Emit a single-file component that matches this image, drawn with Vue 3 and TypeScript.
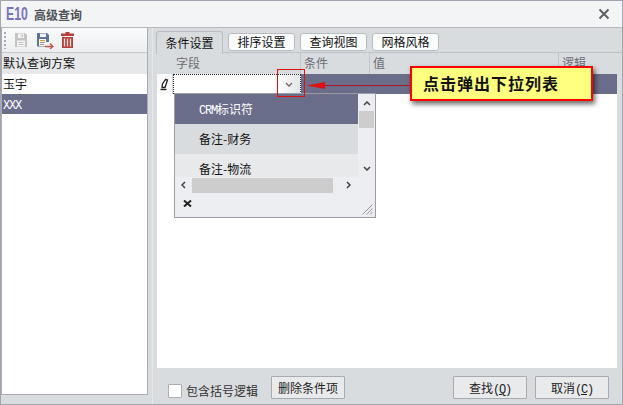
<script setup lang="ts">
const plans = [
  { name: '玉宇', latin: '', selected: false },
  { name: '', latin: 'XXX', selected: true },
]
const tabs = ['条件设置', '排序设置', '查询视图', '网格风格']
const options = [
  { latin: 'CRM', name: '标识符', cls: 'opt-sel' },
  { latin: '', name: '备注-财务', cls: 'opt-a' },
  { latin: '', name: '备注-物流', cls: 'opt-b' },
]
</script>

<template>
  <div class="win">
    <header class="title">
      <span class="logo">E10</span>
      <span class="title-text">高级查询</span>
      <svg class="close" width="12" height="12" viewBox="0 0 12 12"><path d="M1.500 1.500l9 9M10.500 1.500l-9 9" stroke="#5c6066" stroke-width="2" fill="none"/></svg>
    </header>
    <div class="body">
      <aside class="left">
        <div class="toolbar">
          <span class="grip"></span>
          <svg width="14" height="16" viewBox="0 0 14 16"><path d="M1 1h10l2 2v12H1z" fill="#c4c4c4"/><path d="M4 1.500h6v4.500H4z" fill="#f2f2f2"/><path d="M7.500 2.500h1.500v2.500H7.500z" fill="#c4c4c4"/><path d="M3 8.500h8v6H3z" fill="#f2f2f2"/><path d="M4.500 10.500h5M4.500 12.500h5" stroke="#c4c4c4"/></svg>
          <svg class="saveas" width="18" height="17" viewBox="0 0 18 17"><path d="M1 1h10l2 2v7H9.500v4.500H1z" fill="#5f7596"/><path d="M4 1.500h6v3.500H4z" fill="#f2f4f7"/><path d="M3 7h7v7H3z" fill="#fbf6e8"/><path d="M4 8.500h5" stroke="#d9992e"/><path d="M4 10.500h5M4 12.500h4" stroke="#8a9ab0"/><path d="M9 14.500h8M14 11.500l3 3-3 2.500" fill="none" stroke="#c8504c" stroke-width="1.300"/></svg>
          <svg class="trash" width="13" height="16" viewBox="0 0 13 16"><path d="M4.500 0h4v1.500H13v2.500H0V1.500h4.500z" fill="#b5403b"/><path d="M1 5h11v11H1z" fill="#b5403b"/><path d="M3.500 6.500v8M6.500 6.500v8M9.500 6.500v8" stroke="#f3dede" stroke-width="1.300"/></svg>
        </div>
        <div class="plan-head">默认查询方案</div>
        <div v-for="p in plans" :key="p.name + p.latin" class="plan" :class="{ sel: p.selected }"><span class="lat">{{ p.latin }}</span>{{ p.name }}</div>
      </aside>
      <span class="splitter"></span>
      <main class="right">
        <nav class="tabs">
          <span v-for="(t, i) in tabs" :key="t" class="tab" :class="{ active: i === 0 }">{{ t }}</span>
        </nav>
        <div class="grid">
          <div class="grid-head">
            <span class="h h1">字段</span>
            <span class="h h2">条件</span>
            <span class="h h3">值</span>
            <span class="h h4">逻辑</span>
          </div>
          <div class="grid-row">
            <span class="pen"><svg width="9" height="13" viewBox="0 0 9 13"><path d="M5.500 1.500L7.500 2 5 9.500 2 9.500 2.500 6z" fill="#fff" stroke="#222" stroke-width="1.300"/><path d="M.5 11.500h6" stroke="#222" stroke-width="1.300"/></svg></span>
            <span class="edit">
              <span class="drop-btn"><svg width="8" height="5" viewBox="0 0 8 5"><path d="M1 1l3 3 3-3" fill="none" stroke="#666a70" stroke-width="1.300"/></svg></span>
            </span>
            <span class="row-fill"></span>
          </div>
          <div class="grid-white"></div>
        </div>
        <footer class="foot">
          <span class="check"></span>
          <span class="check-label">包含括号逻辑</span>
          <button class="btn del">删除条件项</button>
          <span class="spacer"></span>
          <button class="btn act">查找<span class="lat">(<u>Q</u>)</span></button>
          <button class="btn act">取消<span class="lat">(<u>C</u>)</span></button>
        </footer>
      </main>
    </div>

    <div class="dropdown">
      <div class="dd-main">
        <div class="dd-list">
          <div v-for="o in options" :key="o.name" class="opt" :class="o.cls"><span class="lat">{{ o.latin }}</span>{{ o.name }}</div>
        </div>
        <div class="vbar">
          <svg width="8" height="5" viewBox="0 0 8 5"><path d="M1 4l3-3 3 3" fill="none" stroke="#444" stroke-width="1.500"/></svg>
          <span class="vthumb"></span>
          <span class="spacer"></span>
          <svg width="8" height="5" viewBox="0 0 8 5"><path d="M1 1l3 3 3-3" fill="none" stroke="#444" stroke-width="1.500"/></svg>
        </div>
      </div>
      <div class="hbar">
        <svg width="5" height="8" viewBox="0 0 5 8"><path d="M4 1L1 4l3 3" fill="none" stroke="#444" stroke-width="1.500"/></svg>
        <span class="hthumb"></span>
        <svg width="5" height="8" viewBox="0 0 5 8"><path d="M1 1l3 3-3 3" fill="none" stroke="#444" stroke-width="1.500"/></svg>
      </div>
      <div class="dd-foot">
        <svg class="dd-x" width="9" height="7" viewBox="0 0 9 7"><path d="M1 .5l7 6M8 .5l-7 6" stroke="#222" stroke-width="2" fill="none"/></svg>
        <svg class="dd-grip" width="11" height="11" viewBox="0 0 11 11"><path d="M10.500 .5L.5 10.500M10.500 4.500L4.500 10.500M10.500 8L8 10.500" stroke="#999" fill="none"/></svg>
      </div>
    </div>

    <div class="mark"></div>
    <svg class="arrow" width="104" height="12" viewBox="0 0 104 12">
      <path d="M14 6.500h90" stroke="#a81818" stroke-width="1"/>
      <path d="M0 6.500L18 3V10z" fill="#e01010"/>
    </svg>
    <div class="callout">点击弹出下拉列表</div>
  </div>
</template>

<style>
html, body { margin: 0; padding: 0; background: #fff; }
</style>

<style scoped>
.win {
  position: relative;
  width: 623px;
  height: 405px;
  box-sizing: border-box;
  border: 1px solid #a3a6b0;
  background: #d9dcdf;
  font-family: "Noto Sans CJK SC", "Liberation Sans", sans-serif;
  font-size: 12px;
  color: #111;
  display: flex;
  flex-direction: column;
  overflow: hidden;
}
.lat {
  font-family: "Liberation Mono", monospace;
  letter-spacing: -1.2px;
}
.title {
  height: 27px;
  flex: none;
  display: flex;
  align-items: center;
  box-sizing: border-box;
  background: #f3f4f6;
  border-bottom: 1px solid #b5b9be;
  padding-left: 5px;
  padding-right: 12px;
}
.logo {
  font-family: "Liberation Sans", sans-serif;
  font-size: 18px;
  font-weight: 700;
  color: #7a72c4;
  width: 28px;
  display: inline-block;
  transform: scaleX(.68);
  transform-origin: left center;
}
.title-text { font-weight: 700; color: #4e5259; flex: 1; }
.body { flex: 1; display: flex; min-height: 0; }
.left {
  width: 147px;
  margin-bottom: 9px;
  box-sizing: border-box;
  background: #fff;
  border-left: 1px solid #a9adb3;
  border-right: 1px solid #a9adb3;
  border-bottom: 1px solid #a9adb3;
  display: flex;
  flex-direction: column;
  flex: none;
}
.toolbar {
  height: 25px;
  flex: none;
  background: linear-gradient(#fbfbfc, #eceef0);
  border-bottom: 1px solid #c4c7cb;
  display: flex;
  align-items: center;
  gap: 8px;
  padding-left: 2px;
  box-sizing: border-box;
}
.grip {
  width: 2px;
  height: 17px;
  background: repeating-linear-gradient(#a8abb0 0 2px, transparent 2px 4px);
}
.trash { margin-left: -1px; }
.plan-head, .plan {
  height: 20px;
  line-height: 20px;
  padding-left: 1px;
  flex: none;
  white-space: nowrap;
}
.plan-head { background: #e7e8ea; height: 21px; }
.plan.sel { background: #6b6e8a; color: #fff; }
.splitter {
  width: 1px;
  flex: none;
  margin-left: 4px;
  background: #e6e8ea;
}
.right {
  flex: 1;
  margin-left: 4px;
  margin-right: 5px;
  display: flex;
  flex-direction: column;
  min-width: 0;
}
.tabs {
  height: 25px;
  flex: none;
  display: flex;
  align-items: flex-end;
  gap: 5px;
  padding-bottom: 1px;
  margin-left: -1px;
  margin-right: -5px;
  box-sizing: border-box;
  border-bottom: 1px solid #bfc3c8;
}
.tab {
  height: 18px;
  line-height: 16px;
  width: 67px;
  text-align: center;
  background: #fafbfb;
  border: 1px solid #b9bdc2;
  border-radius: 3px;
  white-space: nowrap;
  box-sizing: border-box;
}
.tab.active {
  height: 23px;
  line-height: 22px;
  margin-bottom: -3px;
  background: #d9dcdf;
  border-bottom: none;
  border-radius: 3px 3px 0 0;
}
.grid { flex: 1; display: flex; flex-direction: column; min-height: 0; }
.grid-head {
  height: 21px;
  flex: none;
  display: flex;
  color: #6a6d73;
  line-height: 20px;
}
.h { box-sizing: border-box; padding-left: 3px; border-right: 1px solid #c2c5ca; }
.h1 { width: 144px; padding-left: 19px; }
.h2 { width: 69px; }
.h3 { width: 188px; border-right: none; }
.h4 { flex: 1; border-right: none; border-left: 1px solid #c2c5ca; }
.grid-row { height: 20px; flex: none; display: flex; }
.pen {
  width: 16px;
  box-sizing: border-box;
  background: #fafafb;
  border-right: 1px solid #d0d2d6;
  display: flex;
  align-items: center;
  justify-content: center;
}
.edit {
  width: 128px;
  box-sizing: border-box;
  background: #fff;
  border: 1px dotted #333;
  border-bottom: none;
  display: flex;
  justify-content: flex-end;
}
.drop-btn {
  width: 22px;
  display: flex;
  align-items: center;
  justify-content: center;
  background: linear-gradient(to right, #fff, #e4e5e7);
}
.row-fill { flex: 1; background: #6b6e8a; }
.grid-white { flex: 1; background: #fff; }
.foot {
  height: 36px;
  flex: none;
  display: flex;
  align-items: flex-start;
  box-sizing: border-box;
  padding: 8px 8px 0 11px;
}
.check {
  width: 14px;
  height: 14px;
  box-sizing: border-box;
  border: 1px solid #aab0b8;
  background: #fff;
  border-radius: 1px;
  margin-top: 8px;
}
.check-label { margin-left: 4px; margin-top: 6px; color: #333; line-height: 17px; }
.btn {
  font: inherit;
  color: #222;
  height: 23px;
  width: 74px;
  padding: 0;
  line-height: 21px;
  background: #e9eaec;
  border: 1px solid #a8acb2;
  border-radius: 1px;
}
.del { margin-left: 13px; }
.act { margin-left: 8px; }
.spacer { flex: 1; }

.dropdown {
  position: absolute;
  left: 173px;
  top: 92px;
  width: 202px;
  height: 125px;
  box-sizing: border-box;
  border: 1px solid #9a9da3;
  background: #eceef1;
  display: flex;
  flex-direction: column;
}
.dd-main { height: 83px; display: flex; flex: none; }
.dd-list { flex: 1; overflow: hidden; background: #fff; padding-bottom: 1px; box-sizing: border-box; }
.opt { height: 30px; line-height: 30px; padding-left: 24px; white-space: nowrap; }
.opt-sel { background: #6b6e8a; color: #fff; }
.opt-a { background: #d9dcdf; }
.opt-b { background: #e8e9eb; }
.vbar {
  width: 17px;
  flex: none;
  background: #eceef1;
  display: flex;
  flex-direction: column;
  align-items: center;
  padding: 7px 0 6px;
  box-sizing: border-box;
}
.vthumb { width: 15px; height: 17px; margin-top: 5px; background: #cdcdcd; }
.hbar {
  height: 16px;
  flex: none;
  display: flex;
  align-items: center;
  padding: 0 6px;
}
.hthumb { width: 141px; height: 15px; margin: 0 13px 0 6px; background: #cdcdcd; }
.dd-foot {
  flex: 1;
  display: flex;
  justify-content: space-between;
  align-items: flex-start;
  padding: 0 2px 0 8px;
}
.dd-x { margin-top: 7px; }
.dd-grip { margin-top: 11px; }
.mark {
  position: absolute;
  left: 276px;
  top: 68px;
  width: 28px;
  height: 28px;
  box-sizing: border-box;
  border: 1px solid #e01010;
}
.arrow {
  position: absolute;
  left: 306px;
  top: 78px;
}
.callout {
  position: absolute;
  left: 409px;
  top: 65px;
  width: 183px;
  height: 35px;
  box-sizing: border-box;
  border: 2px solid #f00;
  background: #ffff80;
  box-shadow: 2px 3px 5px rgba(0, 0, 0, .6);
  font-size: 16px;
  font-weight: 700;
  letter-spacing: 1px;
  line-height: 31px;
  padding-left: 11px;
  color: #111;
  white-space: nowrap;
}
</style>
